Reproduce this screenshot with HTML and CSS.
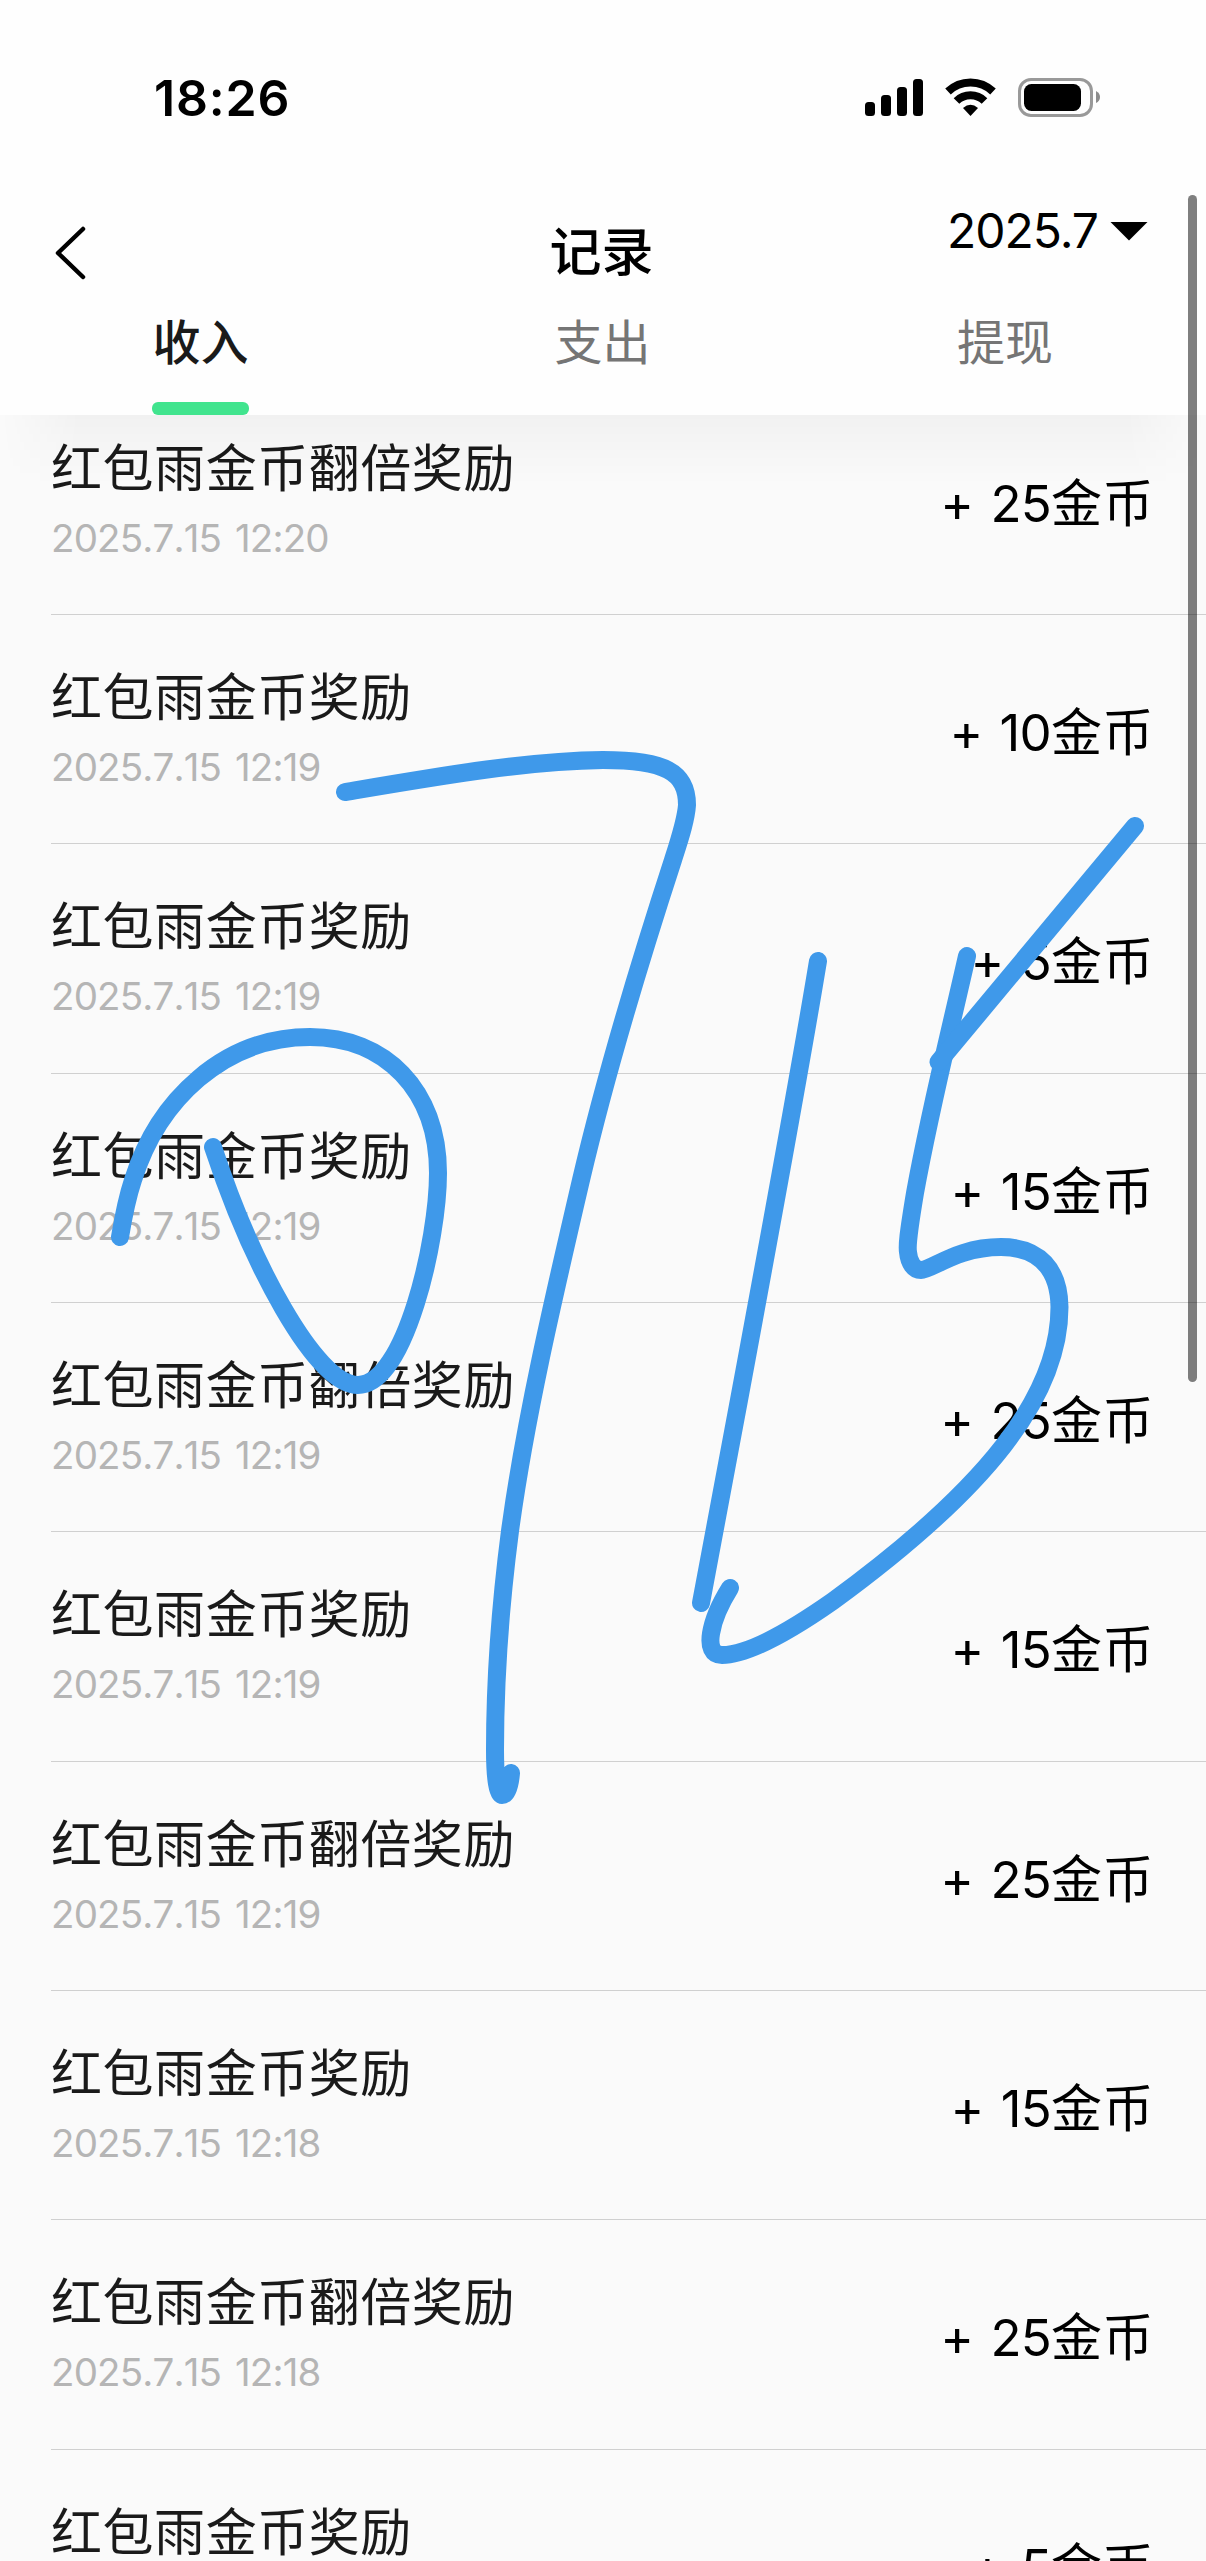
FILE: index.html
```html
<!DOCTYPE html>
<html lang="zh-CN">
<head>
<meta charset="utf-8">
<title>记录</title>
<link rel="stylesheet" href="styles.css">
</head>
<body>
<div class="screen">
  <header class="header">
    <div class="status">
      <span class="clock">18:26</span>
      <svg class="status-icons" width="240" height="44" viewBox="862 76 240 44">
        <rect x="865" y="102" width="10" height="14" rx="3.5"/>
        <rect x="881" y="95" width="10" height="21" rx="3.5"/>
        <rect x="897" y="87" width="10" height="29" rx="3.5"/>
        <rect x="913" y="79" width="10" height="37" rx="3.5"/>
        <path d="M948 91.500A32.500 32.500 0 0 1 993 91.500" fill="none" stroke="#000" stroke-width="8"/>
        <path d="M956.500 101A20 20 0 0 1 984.500 101" fill="none" stroke="#000" stroke-width="8"/>
        <path d="M963 108Q970.500 101.500 978 108L970.500 116Z"/>
        <rect x="1019.500" y="79.500" width="72" height="36" rx="11.500" fill="none" stroke="#999" stroke-width="3"/>
        <rect x="1024" y="84" width="57" height="27" rx="7.500"/>
        <path d="M1096 91Q1100 93 1100 97T1096 103Z" fill="#8c8c8c"/>
      </svg>
    </div>
    <nav class="navbar">
      <svg class="back" width="36" height="60" viewBox="0 0 36 60"><path d="M31 6L6 30L31 54" fill="none" stroke="#000" stroke-width="4.500" stroke-linecap="round" stroke-linejoin="round"/></svg>
      <h1 class="title">记录</h1>
      <div class="month"><span>2025.7</span><i class="caret"></i></div>
    </nav>
    <div class="tabs">
      <div class="tab active">收入</div>
      <div class="tab">支出</div>
      <div class="tab">提现</div>
    </div>
  </header>
  <main class="list">
    <div class="row"><div class="info"><p class="name">红包雨金币翻倍奖励</p><p class="date">2025.7.15 12:20</p></div><div class="amount">+ <span class="num">25</span>金币</div></div>
    <div class="row"><div class="info"><p class="name">红包雨金币奖励</p><p class="date">2025.7.15 12:19</p></div><div class="amount">+ <span class="num">10</span>金币</div></div>
    <div class="row"><div class="info"><p class="name">红包雨金币奖励</p><p class="date">2025.7.15 12:19</p></div><div class="amount">+ <span class="num">5</span>金币</div></div>
    <div class="row"><div class="info"><p class="name">红包雨金币奖励</p><p class="date">2025.7.15 12:19</p></div><div class="amount">+ <span class="num">15</span>金币</div></div>
    <div class="row"><div class="info"><p class="name">红包雨金币翻倍奖励</p><p class="date">2025.7.15 12:19</p></div><div class="amount">+ <span class="num">25</span>金币</div></div>
    <div class="row"><div class="info"><p class="name">红包雨金币奖励</p><p class="date">2025.7.15 12:19</p></div><div class="amount">+ <span class="num">15</span>金币</div></div>
    <div class="row"><div class="info"><p class="name">红包雨金币翻倍奖励</p><p class="date">2025.7.15 12:19</p></div><div class="amount">+ <span class="num">25</span>金币</div></div>
    <div class="row"><div class="info"><p class="name">红包雨金币奖励</p><p class="date">2025.7.15 12:18</p></div><div class="amount">+ <span class="num">15</span>金币</div></div>
    <div class="row"><div class="info"><p class="name">红包雨金币翻倍奖励</p><p class="date">2025.7.15 12:18</p></div><div class="amount">+ <span class="num">25</span>金币</div></div>
    <div class="row last"><div class="info"><p class="name">红包雨金币奖励</p></div><div class="amount">+ <span class="num">5</span>金币</div></div>
  </main>
  <svg class="ink" width="1206" height="2561" viewBox="0 0 1206 2561">
    <path d="M120 1237C124 1213 128 1195 133 1180C158 1100 224 1037 310 1037C385 1037 438 1090 438 1173C438 1240 405 1385 358 1385C315 1385 250 1260 213 1147"/>
    <path d="M345 792C440 776 525 761 603 760C665 760 687 772 687 805C686 820 680 838 673 860C642 955 608 1065 581 1180C553 1300 525 1420 510 1531C501 1600 495 1680 495 1750C495 1780 498 1795 502 1795C507 1795 510 1785 511 1773"/>
    <path d="M818 961C800 1070 765 1260 739 1400L701 1603"/>
    <path d="M967 956C948 1040 930 1110 915 1193C908 1235 907 1246 908 1252C909 1263 914 1270 921 1270C932 1270 957 1247 1001 1247C1040 1247 1059 1270 1059.500 1307C1059.500 1397 985 1490 833 1601C783 1636 745 1655 722 1655C702 1655 710 1620 730 1588"/>
    <path d="M1135 826L938.500 1062"/>
  </svg>
  <div class="scrollbar"></div>
</div>
</body>
</html>
```
FILE: styles.css
```css
* { box-sizing: border-box; margin: 0; padding: 0; }
body { background: #fafafa; }
.screen {
  position: relative;
  width: 1206px;
  height: 2561px;
  overflow: hidden;
  background: #fafafa;
  color: #000;
  font-family: Inter, "Noto Sans CJK SC", sans-serif;
}
.header {
  position: relative;
  z-index: 1;
  height: 415px;
  background: #fefefe;
}
.header::after {
  content: "";
  position: absolute;
  top: 415px;
  left: 0;
  right: 0;
  height: 70px;
  background: linear-gradient(rgba(0, 0, 0, .036), transparent);
  -webkit-mask-image: linear-gradient(90deg, transparent, #000 80px, #000 1126px, transparent);
  mask-image: linear-gradient(90deg, transparent, #000 80px, #000 1126px, transparent);
}
.status {
  display: flex;
  justify-content: space-between;
  align-items: center;
  height: 196px;
  padding: 0 104px 0 154px;
}
.clock { font-size: 50px; font-weight: 600; letter-spacing: .8px; }
.navbar {
  display: grid;
  grid-template-columns: 1fr auto 1fr;
  align-items: center;
  height: 114px;
  padding: 0 55px 0 52px;
}
.title { font-size: 52px; line-height: 60px; font-weight: 500; }
.month {
  display: flex;
  align-items: center;
  justify-content: flex-end;
  gap: 12px;
  height: 60px;
  margin-right: 3px;
  margin-bottom: 46px;
  font-size: 48px;
  letter-spacing: -1px;
}
.caret {
  width: 38px;
  height: 19px;
  margin-top: 2px;
  background: #000;
  clip-path: polygon(0 0, 100% 0, 50% 100%);
}
.tabs { display: grid; grid-template-columns: 401px 403px 402px; height: 105px; }
.tab {
  display: flex;
  flex-direction: column;
  align-items: center;
  justify-content: space-between;
  color: #757575;
  font-size: 48px;
  line-height: 66px;
}
.tab.active { color: #1a1a1a; font-weight: 500; }
.tab.active::after {
  content: "";
  width: 97px;
  height: 13px;
  border-radius: 6px;
  background: #41e48e;
}
.list { margin-top: -29.33px; }
.row {
  display: flex;
  justify-content: space-between;
  height: 229.33px;
  margin-left: 51px;
  padding-right: 52px;
  border-bottom: 1px solid #d0d0d0;
}
.row.last { height: 141px; border-bottom: 0; }
.name {
  margin-top: 50px;
  color: #1a1a1a;
  font-size: 51px;
  line-height: 66px;
  letter-spacing: .55px;
}
.date {
  margin-top: 6px;
  color: #b5b5b5;
  font-size: 38.5px;
  font-weight: 400;
  font-kerning: none;
  line-height: 60px;
  letter-spacing: -.85px;
  word-spacing: 4px;
}
.amount {
  margin-top: 85px;
  font-size: 51px;
  line-height: 66px;
  letter-spacing: .55px;
  word-spacing: 1px;
}
.num { letter-spacing: -.8px; }
.ink {
  position: absolute;
  z-index: 2;
  top: 0;
  left: 0;
  fill: none;
  stroke: #3f99ea;
  stroke-width: 18px;
  stroke-linecap: round;
  stroke-linejoin: round;
}
.scrollbar {
  position: absolute;
  z-index: 3;
  top: 195px;
  right: 9px;
  width: 9px;
  height: 1187px;
  border-radius: 5px;
  background: rgba(0, 0, 0, .5);
}
```
